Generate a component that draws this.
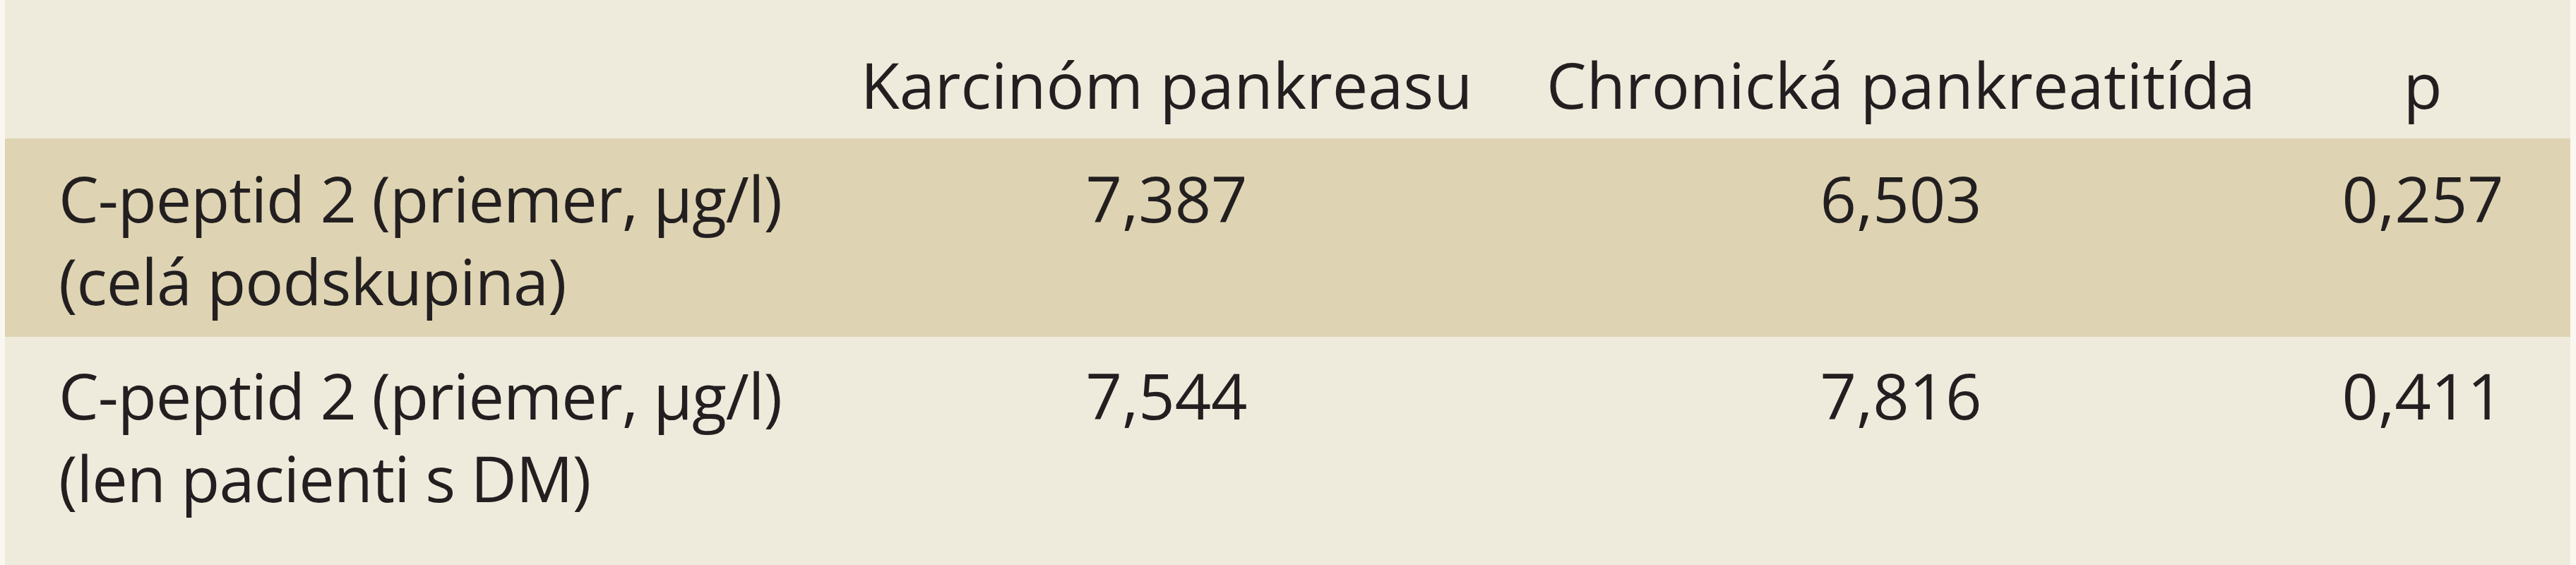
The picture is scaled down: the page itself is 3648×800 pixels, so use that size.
type Row = {
  label: string[];
  carcinoma: string;
  pancreatitis: string;
  p: string;
};

const rows: Row[] = [
  {
    label: ['C-peptid 2 (priemer, µg/l)', '(celá podskupina)'],
    carcinoma: '7,387',
    pancreatitis: '6,503',
    p: '0,257',
  },
  {
    label: ['C-peptid 2 (priemer, µg/l)', '(len pacienti s DM)'],
    carcinoma: '7,544',
    pancreatitis: '7,816',
    p: '0,411',
  },
];

const cols = 'grid grid-cols-[1135px_1020px_1060px_418px]';

const App = () => (
  <div
    className="h-[800px] w-[3648px] overflow-hidden bg-[#f9f7f0] pl-[7px] text-[90px] leading-[117px] text-[#231f20]"
    style={{ fontFamily: '"Open Sans", "Noto Sans", sans-serif' }}
  >
    <div className="h-full w-[3633px] bg-[#efebdc]">
      {/* Header */}
      <div className={`${cols} h-[196px] pt-[61px]`}>
        <div />
        <div className="text-center">Karcinóm pankreasu</div>
        <div className="text-center">Chronická pankreatitída</div>
        <div className="text-center">p</div>
      </div>

      {/* Body rows */}
      {rows.map((row, i) => (
        <div
          key={i}
          className={`${cols} ${
            i % 2 === 0
              ? 'h-[281px] bg-[#ded4b3] pt-[26px]'
              : 'h-[323px] pt-[24px]'
          }`}
        >
          <div className="pl-[76px] tracking-[-1px]">
            {row.label.map((line) => (
              <div key={line}>{line}</div>
            ))}
          </div>
          <div className="text-center">{row.carcinoma}</div>
          <div className="text-center">{row.pancreatitis}</div>
          <div className="text-center">{row.p}</div>
        </div>
      ))}
    </div>
  </div>
);

export default App;
